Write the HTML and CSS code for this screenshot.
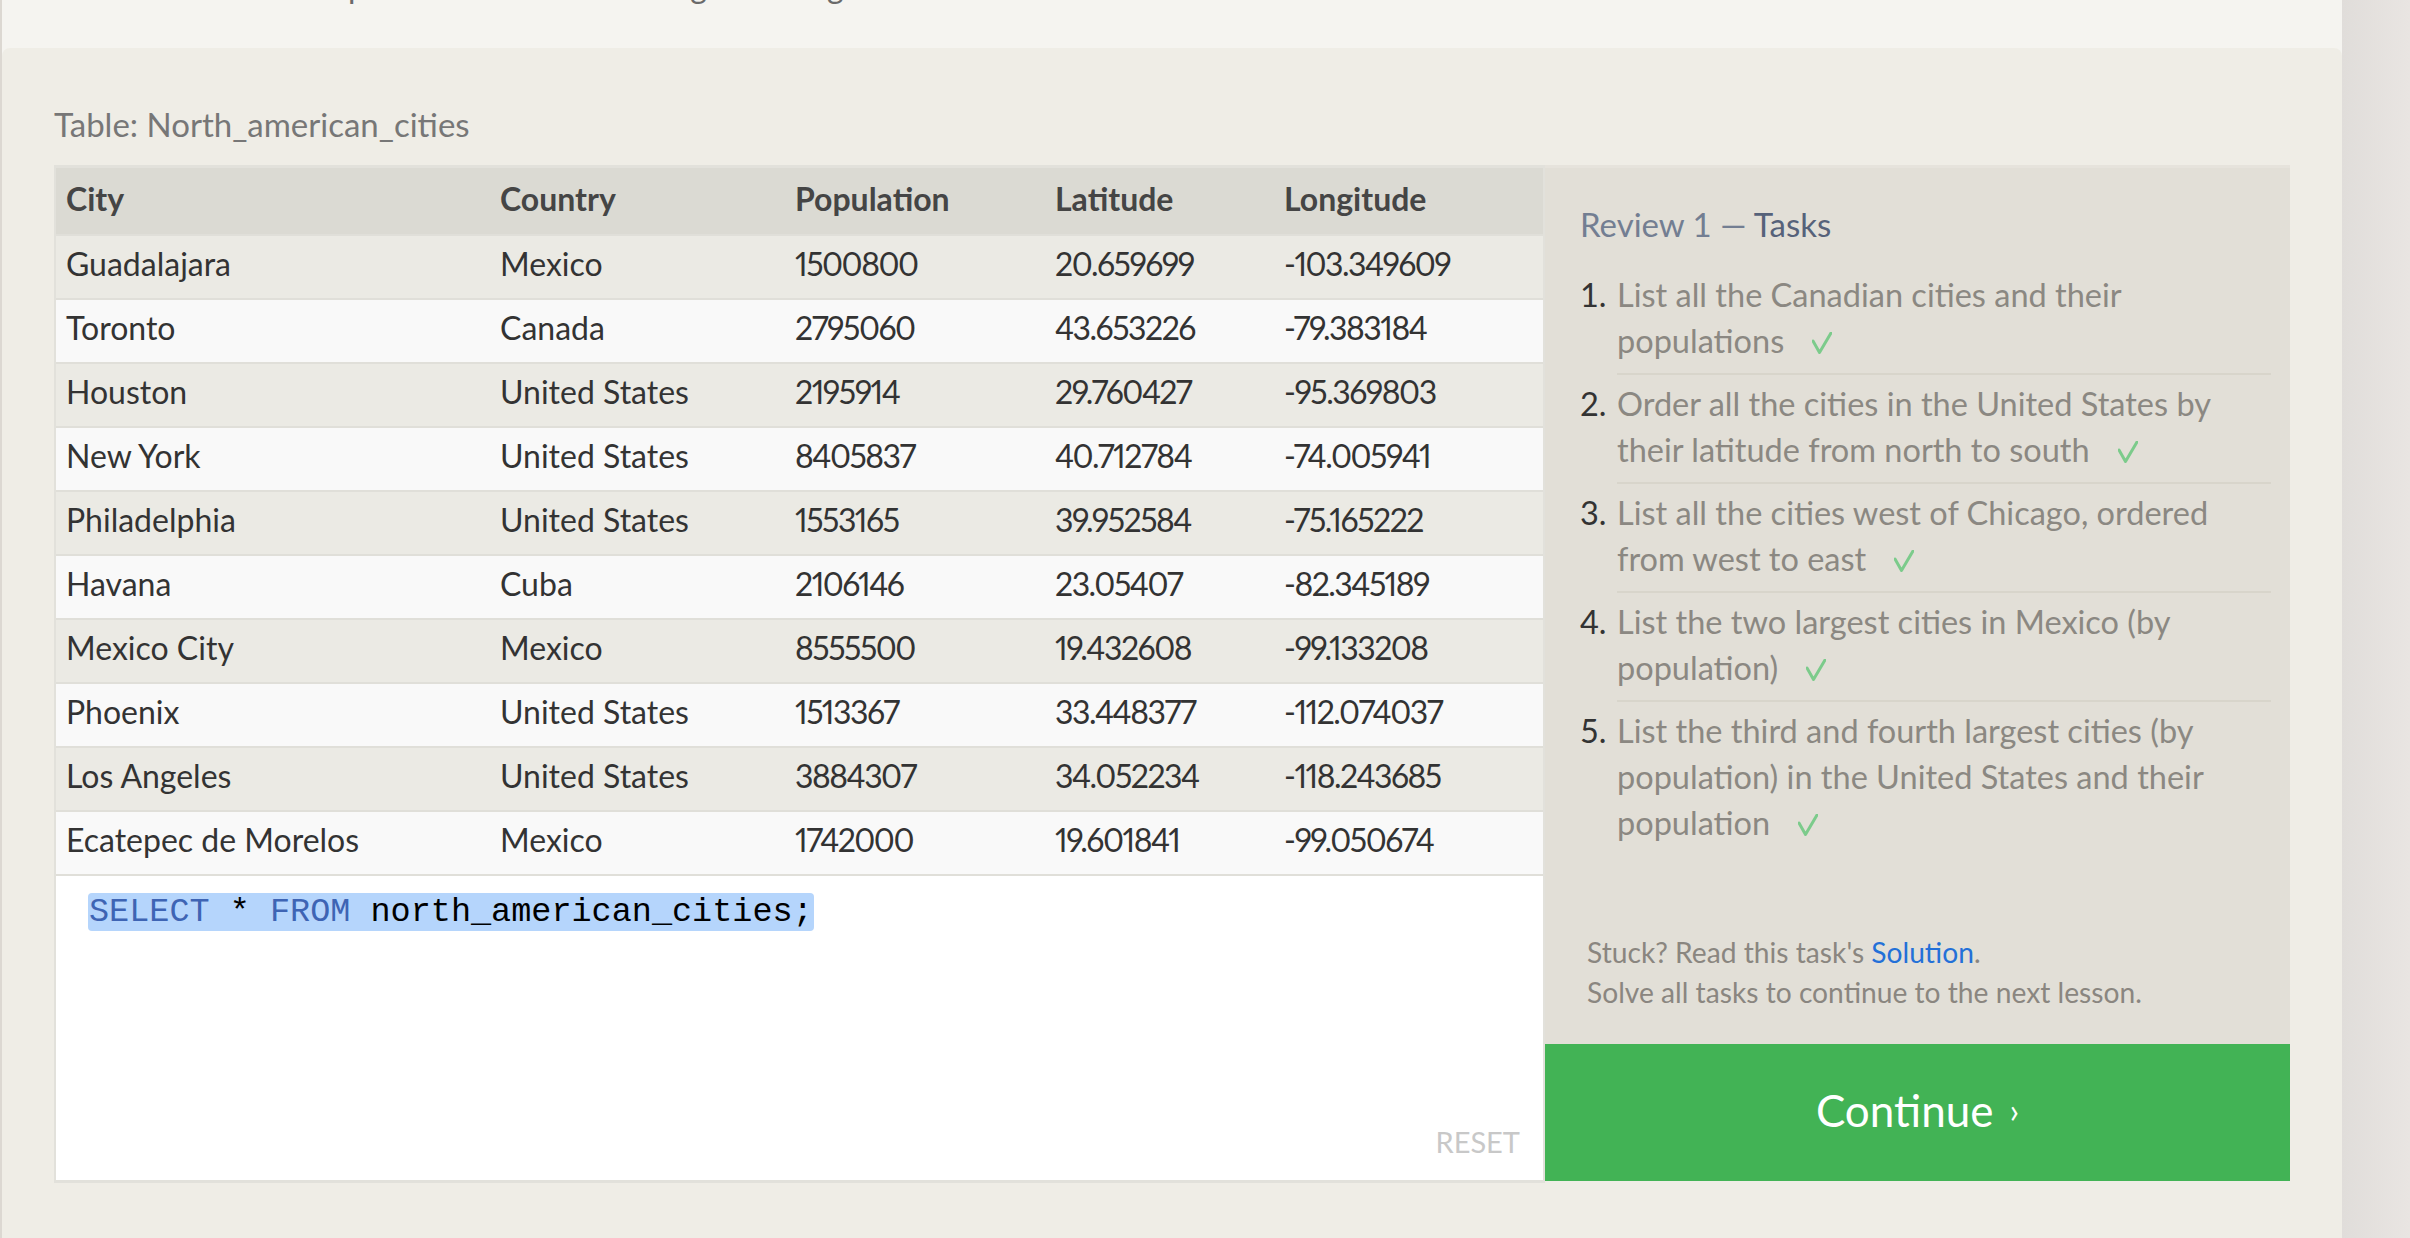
FILE: index.html
```html
<!DOCTYPE html>
<html lang="en">
<head>
<meta charset="utf-8">
<title>SQL Review 1 — Tasks</title>
<link rel="stylesheet" href="styles.css">
</head>
<body>
<div class="page">
  <div class="main">
    <div class="intro">
      <p class="intro-text">cities in the list have positive latitudes and negative longitudes.</p>
    </div>
    <div class="panel">
      <div class="table-label">Table: North_american_cities</div>
      <div class="workspace">
        <div class="data-col">
          <table class="data">
            <colgroup>
              <col class="w-city"><col class="w-country"><col class="w-pop"><col class="w-lat"><col>
            </colgroup>
            <thead>
              <tr><th>City</th><th>Country</th><th>Population</th><th>Latitude</th><th>Longitude</th></tr>
            </thead>
            <tbody>
              <tr><td>Guadalajara</td><td>Mexico</td><td>1500800</td><td>20.659699</td><td>-103.349609</td></tr>
              <tr><td>Toronto</td><td>Canada</td><td>2795060</td><td>43.653226</td><td>-79.383184</td></tr>
              <tr><td>Houston</td><td>United States</td><td>2195914</td><td>29.760427</td><td>-95.369803</td></tr>
              <tr><td>New York</td><td>United States</td><td>8405837</td><td>40.712784</td><td>-74.005941</td></tr>
              <tr><td>Philadelphia</td><td>United States</td><td>1553165</td><td>39.952584</td><td>-75.165222</td></tr>
              <tr><td>Havana</td><td>Cuba</td><td>2106146</td><td>23.05407</td><td>-82.345189</td></tr>
              <tr><td>Mexico City</td><td>Mexico</td><td>8555500</td><td>19.432608</td><td>-99.133208</td></tr>
              <tr><td>Phoenix</td><td>United States</td><td>1513367</td><td>33.448377</td><td>-112.074037</td></tr>
              <tr><td>Los Angeles</td><td>United States</td><td>3884307</td><td>34.052234</td><td>-118.243685</td></tr>
              <tr><td>Ecatepec de Morelos</td><td>Mexico</td><td>1742000</td><td>19.601841</td><td>-99.050674</td></tr>
            </tbody>
          </table>
          <div class="editor">
            <div class="code"><span class="sel"><span class="kw">SELECT</span> * <span class="kw">FROM</span> north_american_cities;</span></div>
            <div class="reset">RESET</div>
          </div>
        </div>
        <div class="tasks-col">
          <div class="tasks">
            <h2 class="tasks-title"><span class="t-light">Review 1 — </span><span class="t-dark">Tasks</span></h2>
            <ol class="task-list">
              <li class="task"><span class="task-num">1.</span><span class="task-text">List all the Canadian cities and their populations<svg class="check" viewBox="0 0 20 22" aria-hidden="true"><polyline points="1,9 7.5,20.5 19,1"/></svg></span></li>
              <li class="task"><span class="task-num">2.</span><span class="task-text">Order all the cities in the United States by their latitude from north to south<svg class="check" viewBox="0 0 20 22" aria-hidden="true"><polyline points="1,9 7.5,20.5 19,1"/></svg></span></li>
              <li class="task"><span class="task-num">3.</span><span class="task-text">List all the cities west of Chicago, ordered from west to east<svg class="check" viewBox="0 0 20 22" aria-hidden="true"><polyline points="1,9 7.5,20.5 19,1"/></svg></span></li>
              <li class="task"><span class="task-num">4.</span><span class="task-text">List the two largest cities in Mexico (by population)<svg class="check" viewBox="0 0 20 22" aria-hidden="true"><polyline points="1,9 7.5,20.5 19,1"/></svg></span></li>
              <li class="task"><span class="task-num">5.</span><span class="task-text">List the third and fourth largest cities (by population) in the United States and their population<svg class="check" viewBox="0 0 20 22" aria-hidden="true"><polyline points="1,9 7.5,20.5 19,1"/></svg></span></li>
            </ol>
            <div class="help">
              <p>Stuck? Read this task's <a class="solution" href="#">Solution</a>.</p>
              <p>Solve all tasks to continue to the next lesson.</p>
            </div>
          </div>
          <button class="continue" type="button">Continue<span class="chev">›</span></button>
        </div>
      </div>
    </div>
  </div>
  <div class="gutter"></div>
</div>
</body>
</html>
```

FILE: styles.css
```css
html, body {
  margin: 0;
  padding: 0;
  height: 100%;
}

body {
  font-family: Lato, "Open Sans", "Liberation Sans", sans-serif;
  background: #e5e1de;
  overflow: hidden;
}

.page {
  display: flex;
  height: 1238px;
}

.main {
  width: 2340px;
  flex: none;
  border-left: 2px solid #dcd8d2;
  display: flex;
  flex-direction: column;
  background: #f5f4f0;
}

.gutter {
  flex: 1;
  background: linear-gradient(to right, #e0ddda, #e9e5e2);
}

.intro {
  height: 48px;
  overflow: hidden;
  flex: none;
}

.intro-text {
  margin: -34px 0 0;
  padding-left: 53px;
  font-size: 32px;
  line-height: 40px;
  color: #6a6a6a;
}

.panel {
  flex: 1;
  background: #efede6;
  border-radius: 8px 8px 0 0;
  padding: 56px 0 0 52px;
}

.table-label {
  font-size: 33px;
  line-height: 40px;
  color: #777;
  margin-bottom: 21px;
}

.workspace {
  display: flex;
  width: 2236px;
}

.data-col {
  width: 1491px;
  flex: none;
  box-sizing: border-box;
  border: 2px solid #e2e1db;
  border-top-width: 3px;
  border-bottom-width: 3px;
  display: flex;
  flex-direction: column;
}

.data {
  width: 100%;
  table-layout: fixed;
  border-collapse: separate;
  border-spacing: 0;
  font-variant-numeric: proportional-nums;
}

.w-city { width: 434px; }
.w-country { width: 295px; }
.w-pop { width: 260px; }
.w-lat { width: 229px; }

.data th {
  height: 66px;
  padding: 0 0 0 10px;
  vertical-align: top;
  line-height: 62px;
  text-align: left;
  font-weight: 700;
  font-size: 32px;
  color: #454545;
  background: #dbdad3;
}

.data td {
  height: 62px;
  padding: 0 0 0 10px;
  vertical-align: top;
  line-height: 55px;
  border-top: 2px solid #e0dfd9;
  font-size: 32px;
  color: #333;
  white-space: nowrap;
}

.data td:nth-child(n+3) {
  letter-spacing: -1.5px;
}

.data tbody tr:nth-child(odd) td {
  background: #ebeae4;
}

.data tbody tr:nth-child(even) td {
  background: #f9f9f9;
}

.editor {
  height: 306px;
  box-sizing: border-box;
  background: #fff;
  border-top: 2px solid #e0dfd9;
  padding: 17px 23px 21px 32px;
  display: flex;
  flex-direction: column;
}

.code {
  font-family: "Liberation Mono", "DejaVu Sans Mono", monospace;
  font-size: 33.5px;
  line-height: 38px;
  color: #000;
  white-space: pre;
}

.sel {
  background: #b5d5fc;
  border-radius: 4px;
  padding: 0 1px;
}

.kw {
  color: #3e64b4;
}

.reset {
  margin-top: auto;
  align-self: flex-end;
  font-size: 29px;
  line-height: 35px;
  color: #c8c8c8;
}

.tasks-col {
  flex: 1;
  display: flex;
  flex-direction: column;
  background: #e2dfd7;
  border-top: 3px solid #e6e3dc;
  border-bottom: 2px solid #efede6;
}

.tasks {
  flex: 1;
  display: flex;
  flex-direction: column;
  padding: 36px 19px 32px 35px;
}

.tasks-title {
  margin: 0;
  font-size: 33px;
  line-height: 40px;
  font-weight: 400;
}

.t-light { color: #737e92; }
.t-dark { color: #56627a; }

.task-list {
  list-style: none;
  margin: 22px 0 0;
  padding: 0;
}

.task {
  display: flex;
  font-size: 32.5px;
  line-height: 46px;
}

.task-num {
  width: 37px;
  flex: none;
  color: #333;
  padding-top: 6px;
}

.task-text {
  flex: 1;
  color: #8b8882;
  padding: 6px 0 9px;
  border-bottom: 2px solid #d8d5cb;
}

.task:last-child .task-text {
  border-bottom: none;
}

.check {
  width: 20px;
  height: 22px;
  margin-left: 28px;
  vertical-align: -1px;
  fill: none;
  stroke: #7ccb8b;
  stroke-width: 3;
  stroke-linecap: round;
  stroke-linejoin: round;
}

.help {
  margin-top: auto;
  padding-left: 7px;
  font-size: 28.2px;
  line-height: 40px;
  color: #8a8680;
}

.help p {
  margin: 0;
}

.solution {
  color: #2370d8;
  text-decoration: none;
}

.continue {
  flex: none;
  height: 137px;
  border: none;
  margin: 0;
  padding: 0 0 6px;
  background: #42b355;
  color: #fff;
  font-family: inherit;
  font-size: 44px;
  display: flex;
  align-items: center;
  justify-content: center;
}

.chev {
  margin-left: 16px;
  font-size: 34px;
}
```
